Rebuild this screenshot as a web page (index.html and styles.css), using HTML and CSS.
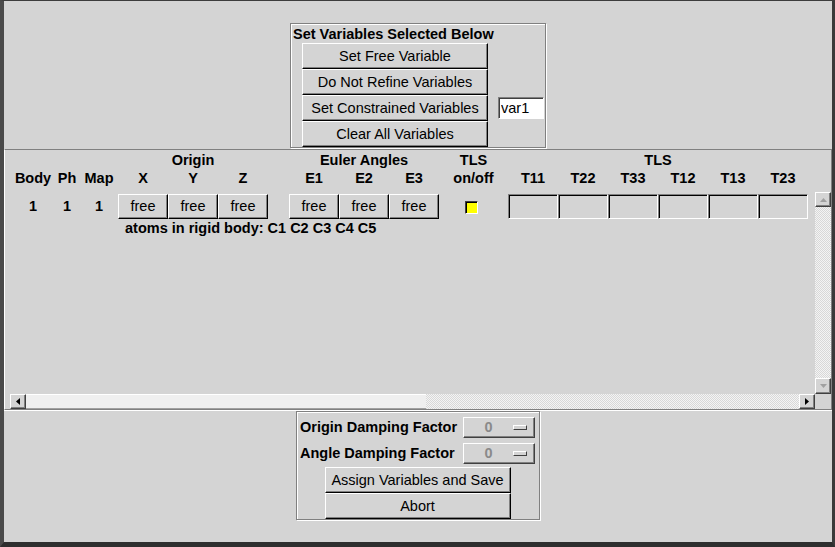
FILE: index.html
```html
<!DOCTYPE html>
<html>
<head>
<meta charset="utf-8">
<title>Rigid Body Variables</title>
<link rel="stylesheet" href="styles.css">
</head>
<body>
<div class="window">
  <div class="top">
    <div class="varbox">
      <div class="title">Set Variables Selected Below</div>
      <div class="vrow"><button class="btn wide">Set Free Variable</button></div>
      <div class="vrow"><button class="btn wide">Do Not Refine Variables</button></div>
      <div class="vrow"><button class="btn wide">Set Constrained Variables</button><input class="entry" value="var1"></div>
      <div class="vrow"><button class="btn wide">Clear All Variables</button></div>
    </div>
  </div>

  <div class="panel">
    <div class="header">
      <div class="hrow">
        <div class="c-id"></div>
        <div class="c-grp">Origin</div>
        <div class="c-gap"></div>
        <div class="c-grp">Euler Angles</div>
        <div class="c-onoff">TLS</div>
        <div class="c-tls">TLS</div>
      </div>
      <div class="hrow">
        <div class="c-body">Body</div>
        <div class="c-ph">Ph</div>
        <div class="c-map">Map</div>
        <div class="c-cell">X</div>
        <div class="c-cell">Y</div>
        <div class="c-cell">Z</div>
        <div class="c-gap"></div>
        <div class="c-cell">E1</div>
        <div class="c-cell">E2</div>
        <div class="c-cell">E3</div>
        <div class="c-onoff">on/off</div>
        <div class="c-cell">T11</div>
        <div class="c-cell">T22</div>
        <div class="c-cell">T33</div>
        <div class="c-cell">T12</div>
        <div class="c-cell">T13</div>
        <div class="c-cell">T23</div>
      </div>
    </div>

    <div class="scroll">
      <div class="content">
        <div class="drow">
          <div class="c-body num">1</div>
          <div class="c-ph num">1</div>
          <div class="c-map num">1</div>
          <button class="btn c-cell">free</button>
          <button class="btn c-cell">free</button>
          <button class="btn c-cell">free</button>
          <div class="c-gap"></div>
          <button class="btn c-cell">free</button>
          <button class="btn c-cell">free</button>
          <button class="btn c-cell">free</button>
          <div class="c-onoff"><span class="check"></span></div>
          <div class="field c-cell"></div>
          <div class="field c-cell"></div>
          <div class="field c-cell"></div>
          <div class="field c-cell"></div>
          <div class="field c-cell"></div>
          <div class="field c-cell"></div>
        </div>
        <div class="atoms">atoms in rigid body: C1 C2 C3 C4 C5</div>
      </div>

      <div class="vbar">
        <div class="arrow up"><svg width="7" height="4" viewBox="0 0 7 4"><polygon points="3.5,0 7,4 0,4" fill="#a0a0a0"/></svg></div>
        <div class="track"></div>
        <div class="arrow down"><svg width="7" height="4" viewBox="0 0 7 4"><polygon points="0,0 7,0 3.5,4" fill="#a0a0a0"/></svg></div>
      </div>

      <div class="hbar">
        <div class="arrow left"><svg width="4" height="7" viewBox="0 0 4 7"><polygon points="4,0 4,7 0,3.5" fill="#000"/></svg></div>
        <div class="thumb"></div>
        <div class="track"></div>
        <div class="arrow right"><svg width="4" height="7" viewBox="0 0 4 7"><polygon points="0,0 4,3.5 0,7" fill="#000"/></svg></div>
      </div>
      <div class="corner"></div>
    </div>
  </div>

  <div class="bottom">
    <div class="dampbox">
      <div class="damprow">
        <span class="dlabel">Origin Damping Factor</span>
        <div class="choice"><span class="val">0</span><span class="ind"></span></div>
      </div>
      <div class="damprow">
        <span class="dlabel">Angle Damping Factor</span>
        <div class="choice"><span class="val">0</span><span class="ind"></span></div>
      </div>
      <button class="btn wide dbtn first">Assign Variables and Save</button>
      <button class="btn wide dbtn">Abort</button>
    </div>
  </div>
</div>
</body>
</html>
```

FILE: styles.css
```css
* { box-sizing: border-box; }

html, body { margin: 0; padding: 0; }

body {
  width: 835px;
  height: 547px;
  overflow: hidden;
  background: #d4d4d4;
  font-family: "Liberation Sans", Arial, sans-serif;
  font-size: 14.5px;
  color: #000;
}

.window {
  width: 835px;
  height: 547px;
  display: flex;
  flex-direction: column;
  border-style: solid;
  border-color: #3c3c3c #3a3a3a #2e2e2e #4a4a4a;
  border-width: 1px 3px 5px 4px;
}

/* generic raised button */
.btn {
  appearance: none;
  margin: 0;
  padding: 0;
  font: inherit;
  color: #000;
  background: #d4d4d4;
  border: 1px solid;
  border-color: #fff #000 #000 #fff;
  box-shadow: inset -1px -1px 0 #808080;
  text-align: center;
  white-space: nowrap;
}

.wide { width: 186px; height: 26px; }

/* top section */
.top { height: 148px; padding-top: 22px; }

.varbox {
  width: 256px;
  height: 125px;
  margin: 0 auto;
  border: 1px solid #808080;
  box-shadow: inset 1px 1px 0 #fff, 1px 1px 0 #fff;
  padding-left: 2px;
}

.title {
  height: 19px;
  line-height: 20px;
  font-weight: bold;
  white-space: nowrap;
}

.vrow {
  display: flex;
  align-items: center;
  height: 26px;
  padding-left: 9px;
}

.entry {
  margin: 0 0 0 10px;
  width: 46px;
  height: 22px;
  padding: 0 0 0 2px;
  font: inherit;
  color: #000;
  background: #fff;
  border: 1px solid;
  border-color: #808080 #fff #fff #808080;
  box-shadow: inset 1px 1px 0 #404040;
  outline: none;
}

/* scrolled panel */
.panel {
  height: 261px;
  border-style: solid;
  border-width: 1px;
  border-color: #808080 #808080 #808080 #fff;
  box-shadow: 0 1px 0 #fff;
  display: flex;
  flex-direction: column;
}

.header {
  height: 42px;
  padding: 1px 0 0 7px;
  font-weight: bold;
}

.hrow {
  display: flex;
  height: 18px;
  line-height: 18px;
  text-align: center;
  white-space: nowrap;
}

.c-id { width: 106px; flex: none; }
.c-body { width: 42px; flex: none; text-align: center; }
.c-ph { width: 26px; flex: none; text-align: center; }
.c-map { width: 38px; flex: none; text-align: center; }
.c-grp { width: 150px; flex: none; }
.c-gap { width: 21px; flex: none; }
.c-onoff { width: 69px; flex: none; text-align: center; }
.c-tls { width: 300px; flex: none; }
.c-cell { width: 50px; flex: none; }

.scroll {
  height: 217px;
  margin-left: 5px;
  display: grid;
  grid-template-columns: 1fr 16px;
  grid-template-rows: 1fr 15px;
}

.content {
  overflow: hidden;
  padding: 1px 0 0 2px;
}

.drow {
  display: flex;
  align-items: center;
  height: 26px;
}

.drow .btn { height: 25px; }

.num {
  font-weight: bold;
  line-height: 25px;
}

.c-onoff .check {
  display: inline-block;
  width: 13px;
  height: 13px;
  margin-right: 5px;
  vertical-align: middle;
  background: #ffff00;
  border: 1px solid;
  border-color: #404040 #fff #fff #404040;
  box-shadow: inset 1px 1px 0 #000;
}

.field {
  height: 25px;
  border: 1px solid;
  border-color: #808080 #fff #fff #808080;
  box-shadow: inset 1px 1px 0 #000;
  background: #d4d4d4;
}

.atoms {
  height: 18px;
  line-height: 18px;
  padding-left: 113px;
  font-weight: bold;
  white-space: nowrap;
}

.vbar {
  display: flex;
  flex-direction: column;
}

.hbar {
  display: flex;
}

.track {
  flex: 1;
  background: repeating-conic-gradient(#f4f4f4 0 25%, #d8d8d8 0 50%) 0 0 / 2px 2px;
}

.arrow {
  flex: none;
  display: flex;
  align-items: center;
  justify-content: center;
  background: #d4d4d4;
  border: 1px solid;
  border-color: #fff #404040 #404040 #fff;
  box-shadow: inset -1px -1px 0 #808080;
}

.arrow.up { height: 15px; }
.arrow.down { height: 16px; }
.arrow.left, .arrow.right { width: 16px; }

.thumb {
  width: 400px;
  flex: none;
  background: #efefef;
  border-top: 1px solid #fff;
  border-bottom: 1px solid #a0a0a0;
}

.corner { background: #d4d4d4; }

/* bottom section */
.bottom {
  flex: 1;
  padding-top: 1px;
}

.dampbox {
  width: 244px;
  margin: 0 auto;
  padding: 2px 4px 0 3px;
  border: 1px solid #808080;
  box-shadow: inset 1px 1px 0 #fff, 1px 1px 0 #fff;
}

.damprow {
  display: flex;
  align-items: center;
  justify-content: space-between;
  height: 26px;
}

.dlabel { font-weight: bold; white-space: nowrap; }

.choice {
  width: 72px;
  height: 21px;
  display: flex;
  align-items: center;
  background: #d4d4d4;
  border: 1px solid;
  border-color: #fff #404040 #404040 #fff;
  box-shadow: inset -1px -1px 0 #808080;
}

.choice .val {
  flex: 1;
  text-align: center;
  color: #8a8a8a;
  font-weight: bold;
}

.choice .ind {
  width: 14px;
  height: 5px;
  margin-right: 7px;
  border: 1px solid;
  border-color: #fff #404040 #404040 #fff;
}

.dbtn {
  display: block;
  margin: 0 auto;
}

.dbtn.first { margin-top: 1px; }
```
